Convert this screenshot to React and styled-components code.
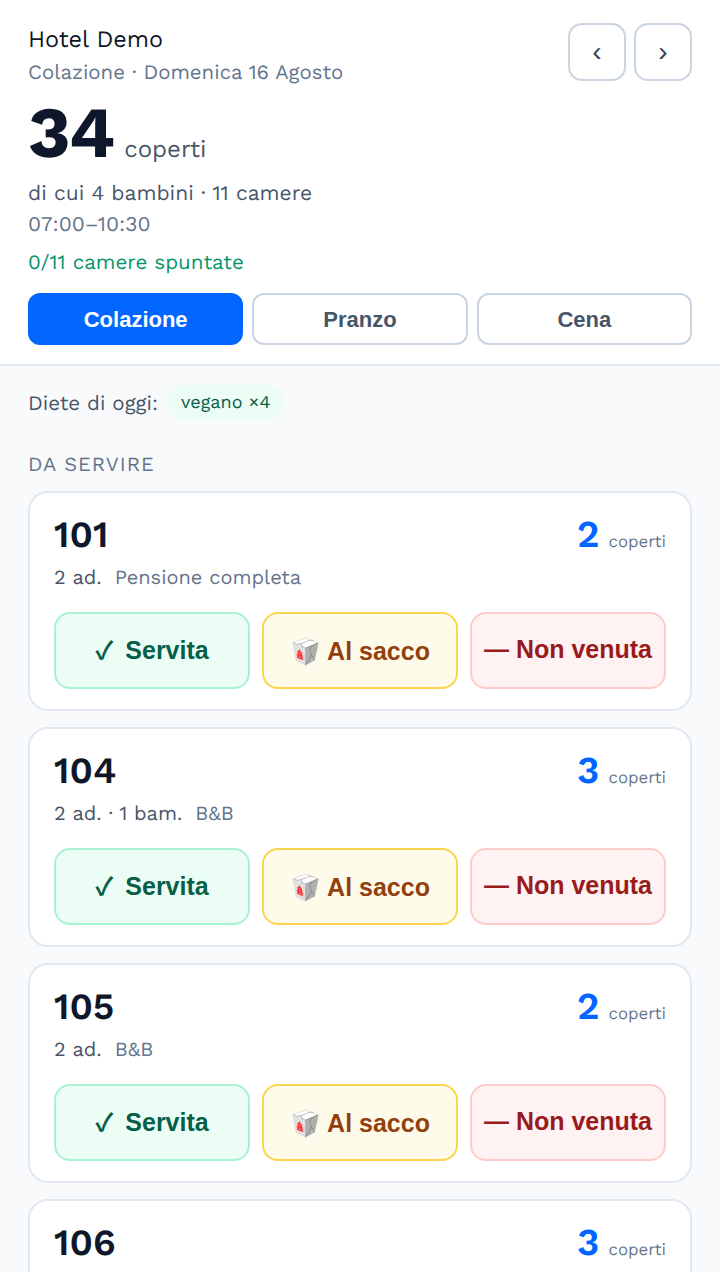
import React from 'react';
import styled, { createGlobalStyle } from 'styled-components';

const Global = createGlobalStyle`
  html, body {
    margin: 0;
    padding: 0;
    background: #f8fafc;
    font-family: 'Work Sans', 'Liberation Sans', sans-serif;
    text-rendering: geometricPrecision;
    height: 1272px;
    overflow: hidden;
  }
  * { box-sizing: border-box; }
`;

const Header = styled.header`
  background: #fff;
  border-bottom: 2px solid #e2e8f0;
  padding: 23px 28px 19px;
`;

const TopRow = styled.div`
  display: flex;
  justify-content: space-between;
  align-items: flex-start;
`;

const Hotel = styled.div`
  font-size: 23.4px;
  line-height: 33px;
  color: #0f172a;
`;

const Sub = styled.div`
  font-size: 20.4px;
  line-height: 32px;
  color: #64748b;
`;

const Nav = styled.div`
  display: flex;
  gap: 8px;
`;

const NavButton = styled.button`
  width: 58px;
  height: 58px;
  border: 2px solid #cbd5e1;
  border-radius: 14px;
  background: #fff;
  color: #334155;
  font-family: 'Liberation Sans', Arial, sans-serif;
  font-size: 28px;
  padding: 0;
`;

const Total = styled.div`
  display: flex;
  align-items: baseline;
  gap: 11px;
  height: 76px;
  margin-top: 7px;
`;

const TotalNum = styled.span`
  font-size: 72px;
  line-height: 76px;
  font-weight: 700;
  letter-spacing: -2px;
  color: #0f172a;
`;

const TotalLabel = styled.span`
  font-size: 24px;
  line-height: 30px;
  color: #475569;
`;

const Detail = styled.div`
  font-size: 21px;
  line-height: 32px;
  color: #475569;
  margin-top: 7px;
`;

const Hours = styled.div`
  font-size: 21px;
  line-height: 30px;
  color: #64748b;
`;

const Progress = styled.div`
  font-size: 20.6px;
  line-height: 30px;
  color: #059669;
  margin-top: 8px;
`;

const Tabs = styled.div`
  display: grid;
  grid-template-columns: repeat(3, 1fr);
  gap: 9px;
  margin-top: 15px;
`;

const Tab = styled.button`
  height: 52px;
  border-radius: 12px;
  border: 2px solid ${({ $active }) => ($active ? '#0066ff' : '#cbd5e1')};
  background: ${({ $active }) => ($active ? '#0066ff' : '#fff')};
  color: ${({ $active }) => ($active ? '#fff' : '#475569')};
  font-family: 'Liberation Sans', Arial, sans-serif;
  font-size: 22px;
  font-weight: 700;
  padding: 2px 0 0;
`;

const Main = styled.main`
  padding: 19px 28px 0;
`;

const DietRow = styled.div`
  display: flex;
  align-items: center;
  gap: 9px;
  font-size: 20.5px;
  color: #475569;
`;

const Chip = styled.span`
  background: #ecfdf5;
  color: #065f46;
  font-size: 18px;
  line-height: 35px;
  padding: 0 14px;
  border-radius: 18px;
`;

const SectionTitle = styled.div`
  font-size: 20px;
  line-height: 28px;
  letter-spacing: 1px;
  color: #64748b;
  text-transform: uppercase;
  margin: 30px 0 13px;
`;

const CardList = styled.div`
  display: flex;
  flex-direction: column;
  gap: 16px;
`;

const Card = styled.article`
  background: #fff;
  border: 2px solid #e2e8f0;
  border-radius: 20px;
  padding: 20px 24px;
  height: 220px;
`;

const CardTop = styled.div`
  display: flex;
  justify-content: space-between;
  align-items: baseline;
  height: 44px;
`;

const Room = styled.span`
  font-size: 37px;
  line-height: 44px;
  font-weight: 600;
  color: #0f172a;
`;

const Covers = styled.span`
  font-size: 16.8px;
  line-height: 44px;
  color: #64748b;
`;

const CoverNum = styled.b`
  font-size: 38px;
  font-weight: 600;
  color: #0066ff;
  margin-right: 9px;
`;

const Guests = styled.div`
  font-size: 20px;
  line-height: 30px;
  color: #475569;
  margin-top: 5px;
`;

const Board = styled.span`
  color: #64748b;
  margin-left: 13px;
`;

const Actions = styled.div`
  display: grid;
  grid-template-columns: repeat(3, 1fr);
  gap: 12px;
  margin-top: 20px;
`;

const tones = {
  green: { bg: '#ecfdf5', line: '#a7f3d0', text: '#065f46', pad: '0' },
  amber: { bg: '#fffbeb', line: '#fcd34d', text: '#92400e', pad: '2px 0 0' },
  red: { bg: '#fef2f2', line: '#fecaca', text: '#991b1b', pad: '0 0 3px' },
};

const Action = styled.button`
  height: 77px;
  border-radius: 16px;
  border: 2px solid ${({ $tone }) => tones[$tone].line};
  background: ${({ $tone }) => tones[$tone].bg};
  color: ${({ $tone }) => tones[$tone].text};
  font-family: 'Liberation Sans', Arial, sans-serif;
  font-size: 25px;
  font-weight: 700;
  padding: ${({ $tone }) => tones[$tone].pad};
  white-space: nowrap;
`;

const Check = styled.span`
  font-family: 'Noto Sans CJK JP', sans-serif;
  line-height: 1;
  margin-right: 5px;
`;

const rooms = [
  { id: '101', covers: 2, guests: '2 ad.', board: 'Pensione completa' },
  { id: '104', covers: 3, guests: '2 ad. · 1 bam.', board: 'B&B' },
  { id: '105', covers: 2, guests: '2 ad.', board: 'B&B' },
  { id: '106', covers: 3, guests: '2 ad. · 1 bam.', board: 'B&B' },
];

export default function App() {
  return (
    <>
      <Global />
      <Header>
        <TopRow>
          <div>
            <Hotel>Hotel Demo</Hotel>
            <Sub>Colazione · Domenica 16 Agosto</Sub>
          </div>
          <Nav>
            <NavButton>‹</NavButton>
            <NavButton>›</NavButton>
          </Nav>
        </TopRow>
        <Total>
          <TotalNum>34</TotalNum>
          <TotalLabel>coperti</TotalLabel>
        </Total>
        <Detail>di cui 4 bambini · 11 camere</Detail>
        <Hours>07:00–10:30</Hours>
        <Progress>0/11 camere spuntate</Progress>
        <Tabs>
          <Tab $active>Colazione</Tab>
          <Tab>Pranzo</Tab>
          <Tab>Cena</Tab>
        </Tabs>
      </Header>
      <Main>
        <DietRow>
          Diete di oggi:
          <Chip>vegano ×4</Chip>
        </DietRow>
        <SectionTitle>Da servire</SectionTitle>
        <CardList>
          {rooms.map((r) => (
            <Card key={r.id}>
              <CardTop>
                <Room>{r.id}</Room>
                <Covers>
                  <CoverNum>{r.covers}</CoverNum>coperti
                </Covers>
              </CardTop>
              <Guests>
                {r.guests}
                <Board>{r.board}</Board>
              </Guests>
              <Actions>
                <Action $tone="green"><Check>✓</Check> Servita</Action>
                <Action $tone="amber">🥡 Al sacco</Action>
                <Action $tone="red">— Non venuta</Action>
              </Actions>
            </Card>
          ))}
        </CardList>
      </Main>
    </>
  );
}
